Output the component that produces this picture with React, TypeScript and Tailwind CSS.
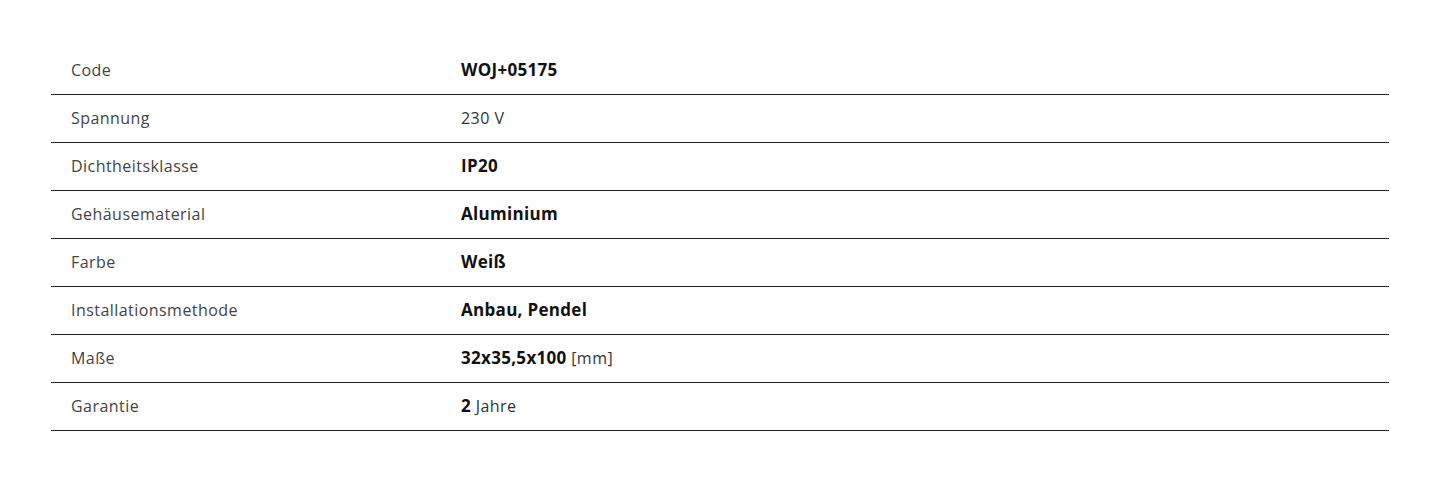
import React from "react";

const B = ({ children }: { children: React.ReactNode }) => (
  <b className="font-bold text-[17px] tracking-[0.3px] text-[#111111]">{children}</b>
);

const rows: { label: string; value: React.ReactNode }[] = [
  { label: "Code", value: <B>WOJ+05175</B> },
  { label: "Spannung", value: <span>230 V</span> },
  { label: "Dichtheitsklasse", value: <B>IP20</B> },
  { label: "Gehäusematerial", value: <B>Aluminium</B> },
  { label: "Farbe", value: <B>Weiß</B> },
  { label: "Installationsmethode", value: <B>Anbau, Pendel</B> },
  {
    label: "Maße",
    value: (
      <span>
        <B>32x35,5x100</B> [mm]
      </span>
    ),
  },
  {
    label: "Garantie",
    value: (
      <span>
        <B>2</B> Jahre
      </span>
    ),
  },
];

export default function App() {
  return (
    <div className="w-[1445px] h-[495px] bg-white pt-[47px] font-['Open_Sans',sans-serif]">
      <div className="ml-[51px] w-[1338px]">
        {rows.map((r) => (
          <div
            key={r.label}
            className="flex items-center h-[48px] pb-[2px] border-b border-[#222222] text-[16px] tracking-[0.45px]"
          >
            <div className="w-[390px] pl-[20px] text-[#444444]">{r.label}</div>
            <div className="pl-[20px] text-[#333333]">{r.value}</div>
          </div>
        ))}
      </div>
    </div>
  );
}
